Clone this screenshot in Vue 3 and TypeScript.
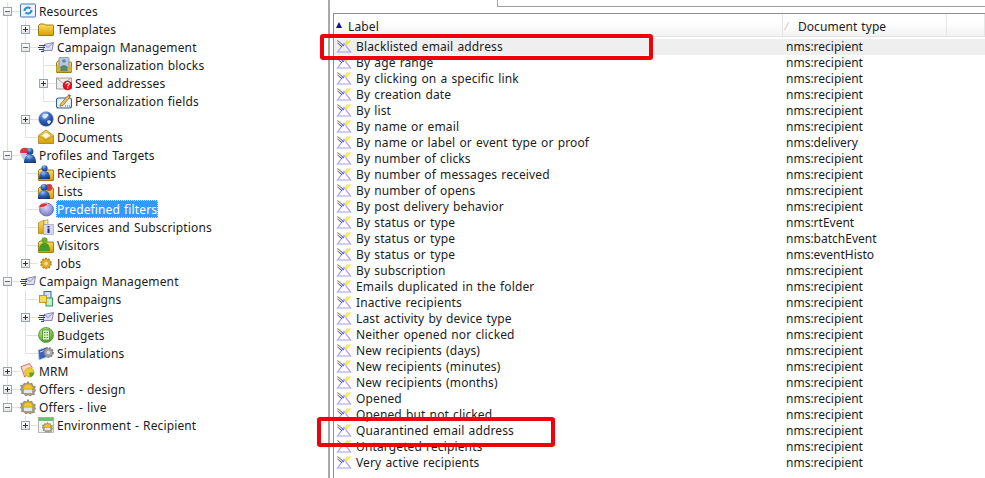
<template>
  <main class="console">
    <svg class="defs" aria-hidden="true">
      <defs>
        <linearGradient id="g-folder" x1="0" y1="0" x2="0" y2="1">
          <stop offset="0" stop-color="#ffe067" />
          <stop offset="1" stop-color="#d99c00" />
        </linearGradient>
        <radialGradient id="g-blue" cx="0.4" cy="0.25" r="0.85">
          <stop offset="0" stop-color="#9cbcec" />
          <stop offset="0.45" stop-color="#2f60bc" />
          <stop offset="1" stop-color="#14306f" />
        </radialGradient>
        <radialGradient id="g-green" cx="0.4" cy="0.3" r="0.8">
          <stop offset="0" stop-color="#c5ee9c" />
          <stop offset="1" stop-color="#3f9a22" />
        </radialGradient>
        <radialGradient id="g-lav" cx="0.45" cy="0.35" r="0.75">
          <stop offset="0" stop-color="#d2d1f4" />
          <stop offset="1" stop-color="#6f6cc0" />
        </radialGradient>
        <symbol id="i-person" viewBox="2 1 12 15">
          <circle cx="8" cy="4.500" r="3.400" fill="url(#g-blue)" />
          <path d="M2 16c0-6 2.200-8.500 6-8.500s6 2.500 6 8.500z" fill="url(#g-blue)" />
        </symbol>
        <symbol id="i-greenperson" viewBox="2 1 12 15">
          <circle cx="8" cy="4.500" r="3.400" fill="#69b02c" />
          <path d="M2 16c0-6 2.200-8.500 6-8.500s6 2.500 6 8.500z" fill="#4c9a20" />
        </symbol>
        <symbol id="i-foldershape" viewBox="0 0 16 16">
          <path d="M.5 4.500 2 3h4.500l1 1h7.500q.500 0 .500.500v9.500q0 .500-.500.500H1q-.500 0-.500-.500z" fill="url(#g-folder)" stroke="#9c7e14" />
        </symbol>
        <symbol id="i-gear" viewBox="0 0 16 16">
          <path d="M8 .5 9.500 3l2.500-.8.600 2.700 2.700.6-.8 2.500 1.500 1.500-2 1.500.4 2.600-2.700.1L10.500 15 8 13.700 5.500 15l-1.200-2.300-2.700-.1.400-2.600-2-1.500L1.500 7l-.8-2.500 2.700-.6L4 2.200l2.500.8z" fill="#a9a18c" stroke="#6f664f" stroke-width=".6" />
        </symbol>
        <symbol id="i-res" viewBox="0 0 16 16">
          <rect x=".5" y="1" width="15" height="13" rx="1" fill="#eef4fb" stroke="#4a74b0" />
          <path d="M4.500 8a3.500 3.500 0 0 1 6-2.500M11.500 7a3.500 3.500 0 0 1-6 2.500" fill="none" stroke="#2a8fd0" stroke-width="2" />
        </symbol>
        <symbol id="i-folder" viewBox="0 0 16 16">
          <use href="#i-foldershape" />
        </symbol>
        <symbol id="i-camp" viewBox="0 0 16 16">
          <path d="M6 5.500 15.500 3.500 14 11.500H5z" fill="#dfdff2" stroke="#7f7eb0" stroke-width=".9" />
          <path d="M6 5.500l4 3 5.500-5" fill="none" stroke="#7f7eb0" stroke-width=".8" />
          <path d="M1 6.500h6M0 8.500h7M1 10.500h5M3 12.500h3" stroke="#3a3a84" stroke-width="1" />
        </symbol>
        <symbol id="i-perso" viewBox="0 0 16 16">
          <use href="#i-foldershape" y="1" />
          <rect x="3" y="0.500" width="10" height="10" rx="1" fill="#b9c8d8" stroke="#6f88a0" stroke-width=".7" />
          <circle cx="8" cy="4" r="1.800" fill="#5a86a8" />
          <path d="M4.500 14V9.500q3.500-3 7 0V14z" fill="#568a78" />
          <rect x="0.500" y="9" width="3" height="5.500" fill="#d5b24a" />
          <rect x="12.500" y="9" width="3" height="5.500" fill="#d5b24a" />
        </symbol>
        <symbol id="i-seed" viewBox="0 0 16 16">
          <path d="M.5 3h15v11H.5z" fill="#ececec" stroke="#8a8a8a" stroke-width=".8" />
          <path d="M.5 3l7 5.500L15 3" fill="none" stroke="#9a9a9a" stroke-width=".8" />
          <circle cx="11.500" cy="10.500" r="4.800" fill="#d8141c" />
          <path d="M9.800 9.300q.2-1.800 1.800-1.800 1.800.1 1.700 1.500c-.1 1.100-1.500 1.200-1.600 2.400M11.700 12.300v1.100" fill="none" stroke="#fff" stroke-width="1.100" />
        </symbol>
        <symbol id="i-field" viewBox="0 0 16 16">
          <rect x=".5" y="5" width="15" height="10" rx="2" fill="#eef4fb" stroke="#2d5f9a" stroke-width="1.100" />
          <path d="M4 11.500 12 2.500l2 1.500-7 8.500-3 .8z" fill="#e9c25e" stroke="#7a5a20" stroke-width=".7" />
          <path d="M12 2.500l1-1.500 2 1.500-1 1.500z" fill="#c94a3c" />
          <path d="M9 13h1M11 13h1M13 13h1" stroke="#2d5f9a" />
        </symbol>
        <symbol id="i-globe" viewBox="0 0 16 16">
          <circle cx="8" cy="8" r="7.500" fill="url(#g-blue)" stroke="#b4c0d8" stroke-width=".6" />
          <path d="M4 5q2-3 6-2 1 2-1 3-1 2-3 1.500zM9 10q3-1.500 4 .5-1 2.500-3 2.500z" fill="#dfe8f8" />
        </symbol>
        <symbol id="i-docs" viewBox="0 0 16 16">
          <path d="M.5 6.500 8 1l7.500 5.500v8H.5z" fill="url(#g-folder)" stroke="#a98a20" stroke-width=".9" />
          <path d="M3 6.500 8 3l5 3.500L8 10z" fill="#fdf7d8" stroke="#b89c3c" stroke-width=".6" />
          <path d="M.5 7 8 11.500 15.500 7" fill="none" stroke="#b58f1c" stroke-width=".8" />
        </symbol>
        <symbol id="i-profiles" viewBox="0 0 16 16">
          <ellipse cx="5" cy="4.500" rx="5" ry="3.800" fill="#d83a3c" />
          <path d="M0 6q1 4 4 7l3-7z" fill="#c8c8e4" />
          <use href="#i-person" x="4" y="1" width="12" height="15" />
        </symbol>
        <symbol id="i-recipients" viewBox="0 0 16 16">
          <use href="#i-foldershape" y="1" />
          <use href="#i-person" x="1" y="0" width="11" height="14" />
        </symbol>
        <symbol id="i-lists" viewBox="0 0 16 16">
          <use href="#i-foldershape" y="1" />
          <circle cx="11" cy="4.500" r="3.400" fill="#d83a3c" />
          <use href="#i-person" x="0" y="1" width="12" height="15" />
        </symbol>
        <symbol id="i-filter" viewBox="0 0 16 16">
          <ellipse cx="8.500" cy="8.500" rx="7" ry="6.500" fill="url(#g-lav)" stroke="#5f5ca6" stroke-width=".8" />
          <path d="M.5 7Q1 2.500 6 2q3-.2 4 1-2 3.500-9.500 4z" fill="#dc2f3c" stroke="#f4f4fb" stroke-width=".6" />
        </symbol>
        <symbol id="i-services" viewBox="0 0 16 16">
          <path d="M.5 4 6 1v13.500H.5z" fill="url(#g-folder)" stroke="#a98a20" stroke-width=".8" />
          <path d="M6 2l4-1.500V6H6z" fill="#f3e7a8" stroke="#a98a20" stroke-width=".6" />
          <rect x="5.500" y="5.500" width="10" height="10" fill="#d6d8ee" stroke="#8f90c0" stroke-width=".6" />
          <path d="M10.500 7v1.500M10.500 9.500V14" stroke="#20208a" stroke-width="2" />
        </symbol>
        <symbol id="i-visitors" viewBox="0 0 16 16">
          <use href="#i-foldershape" y="1" />
          <use href="#i-greenperson" x="1" y="0" width="11" height="14" />
        </symbol>
        <symbol id="i-jobs" viewBox="0 0 16 16">
          <circle cx="8" cy="8.500" r="4.800" fill="#eeb52c" stroke="#b8891c" stroke-dasharray="2 1" stroke-width="2" />
          <circle cx="8" cy="8.500" r="2.600" fill="#f8d878" stroke="#c4922a" stroke-width=".8" />
        </symbol>
        <symbol id="i-campaigns" viewBox="0 0 16 16">
          <rect x="6" y=".5" width="7" height="9" fill="#d5e1f6" stroke="#3a65b5" />
          <rect x="8" y="7" width="6.500" height="8" fill="#c8ecd0" stroke="#2e9a58" />
          <rect x="1.500" y="4.500" width="7" height="7" fill="#f8dc5c" stroke="#c49a1c" />
        </symbol>
        <symbol id="i-budgets" viewBox="0 0 16 16">
          <circle cx="8" cy="8" r="7.500" fill="url(#g-green)" stroke="#4a8a2a" stroke-width=".7" />
          <rect x="4.500" y="3" width="7" height="10" fill="#dff2c8" stroke="#4a8a2a" stroke-width=".8" />
          <path d="M6 5.500h4M6 8h4M6 10.500h4" stroke="#4a8a2a" stroke-dasharray="1 .5" />
        </symbol>
        <symbol id="i-sim" viewBox="0 0 16 16">
          <path d="M0 5 9 2v10l-8 3z" fill="#3a62b8" stroke="#c8d4ea" stroke-width=".8" />
          <path d="M2 7l4-1.500" stroke="#cfe0f8" />
          <circle cx="10.500" cy="7.500" r="4.500" fill="#a6a6a6" stroke="#777" stroke-dasharray="2 1" stroke-width="1.600" />
          <circle cx="10.500" cy="7.500" r="1.800" fill="#dcdcdc" />
        </symbol>
        <symbol id="i-mrm" viewBox="0 0 17 17">
          <path d="M1 4 10 .5 13 5 5 15z" fill="#f5d8d0" stroke="#d8644c" />
          <circle cx="10" cy="10" r="5" fill="#eecb2e" stroke="#c49a1c" stroke-width=".6" />
          <path d="M10 10l5 0a5 5 0 0 1-5 5z" fill="#4ea83a" />
        </symbol>
        <symbol id="i-offers" viewBox="0 0 16 16">
          <use href="#i-gear" />
          <path d="M3 8a5 5 0 0 1 10 0z" fill="#f2c81a" stroke="#b08c18" stroke-width=".5" />
          <path d="M4 8.500h8v3.500H4z" fill="#dfe6ee" />
        </symbol>
        <symbol id="i-env" viewBox="0 0 16 16">
          <rect x=".5" y=".5" width="15" height="15" fill="#f2f2f2" stroke="#9a9a9a" stroke-width=".7" />
          <rect x=".5" y=".5" width="15" height="3.500" fill="#6cc070" />
          <use href="#i-offers" x="4" y="5" width="11" height="11" />
        </symbol>
        <symbol id="i-rowfilter" viewBox="0 0 16 14">
          <path d="M1.500 12 8 3.500 14.500 12z" fill="none" stroke="#a09ee8" stroke-width="1.200" />
          <path d="M1.500 .5 8 6M1.500 3 6 6.800" stroke="#34348c" stroke-width=".9" />
          <path d="M14.500 .5 9.500 5.500M12 .5 9 3.500" stroke="#f2e030" stroke-width="1.300" />
        </symbol>
      </defs>
    </svg>

    <nav class="tree">
      <div v-for="node in nodes" :key="node.label + node.cells" class="node">
        <span v-for="(cell, i) in node.cells" :key="i" class="cell" :class="cellClass(cell)">
          <span
            v-if="node.toggle && i === node.cells.length - 1"
            class="toggle"
            :class="{ open: node.toggle === '-' }"
          ></span>
        </span>
        <svg class="node-icon" width="16" height="16"><use :href="'#i-' + node.icon" /></svg>
        <span class="node-label" :class="{ selected: node.selected }">{{ node.label }}</span>
      </div>
    </nav>

    <section class="pane">
      <div class="search-strip"><div class="search-box"></div></div>
      <div class="grid">
        <div class="grid-head">
          <div class="head-cell label-head"><span class="sort-up"></span>Label</div>
          <div class="head-cell type-head"><span class="sort-mark">⁄</span>Document type</div>
          <div class="head-cell"></div>
        </div>
        <div
          v-for="(row, i) in filters"
          :key="row.label + row.type"
          class="grid-row"
          :class="{ current: i === 0 }"
        >
          <div class="row-label">
            <svg class="row-icon" width="16" height="14"><use href="#i-rowfilter" /></svg>{{ row.label }}
          </div>
          <div class="row-type">{{ row.type }}</div>
        </div>
      </div>
    </section>

    <div class="callout callout-top"></div>
    <div class="callout callout-bottom"></div>
  </main>
</template>

<script setup lang="ts">
interface TreeNode {
  label: string;
  icon: string;
  cells: string;
  toggle?: "+" | "-";
  selected?: boolean;
}

const nodes: TreeNode[] = [
  { label: "Resources", icon: "res", cells: "t", toggle: "-" },
  { label: "Templates", icon: "folder", cells: "vt", toggle: "+" },
  { label: "Campaign Management", icon: "camp", cells: "vt", toggle: "-" },
  { label: "Personalization blocks", icon: "perso", cells: "vvt" },
  { label: "Seed addresses", icon: "seed", cells: "vvt", toggle: "+" },
  { label: "Personalization fields", icon: "field", cells: "vvl" },
  { label: "Online", icon: "globe", cells: "vt", toggle: "+" },
  { label: "Documents", icon: "docs", cells: "vl" },
  { label: "Profiles and Targets", icon: "profiles", cells: "t", toggle: "-" },
  { label: "Recipients", icon: "recipients", cells: "vt" },
  { label: "Lists", icon: "lists", cells: "vt" },
  { label: "Predefined filters", icon: "filter", cells: "vt", selected: true },
  { label: "Services and Subscriptions", icon: "services", cells: "vt" },
  { label: "Visitors", icon: "visitors", cells: "vt" },
  { label: "Jobs", icon: "jobs", cells: "vl", toggle: "+" },
  { label: "Campaign Management", icon: "camp", cells: "t", toggle: "-" },
  { label: "Campaigns", icon: "campaigns", cells: "vt" },
  { label: "Deliveries", icon: "camp", cells: "vt", toggle: "+" },
  { label: "Budgets", icon: "budgets", cells: "vt" },
  { label: "Simulations", icon: "sim", cells: "vl" },
  { label: "MRM", icon: "mrm", cells: "t", toggle: "+" },
  { label: "Offers - design", icon: "offers", cells: "t", toggle: "+" },
  { label: "Offers - live", icon: "offers", cells: "l", toggle: "-" },
  { label: "Environment - Recipient", icon: "env", cells: " l", toggle: "+" },
];

const filters = [
  ["Blacklisted email address", "nms:recipient"],
  ["By age range", "nms:recipient"],
  ["By clicking on a specific link", "nms:recipient"],
  ["By creation date", "nms:recipient"],
  ["By list", "nms:recipient"],
  ["By name or email", "nms:recipient"],
  ["By name or label or event type or proof", "nms:delivery"],
  ["By number of clicks", "nms:recipient"],
  ["By number of messages received", "nms:recipient"],
  ["By number of opens", "nms:recipient"],
  ["By post delivery behavior", "nms:recipient"],
  ["By status or type", "nms:rtEvent"],
  ["By status or type", "nms:batchEvent"],
  ["By status or type", "nms:eventHisto"],
  ["By subscription", "nms:recipient"],
  ["Emails duplicated in the folder", "nms:recipient"],
  ["Inactive recipients", "nms:recipient"],
  ["Last activity by device type", "nms:recipient"],
  ["Neither opened nor clicked", "nms:recipient"],
  ["New recipients (days)", "nms:recipient"],
  ["New recipients (minutes)", "nms:recipient"],
  ["New recipients (months)", "nms:recipient"],
  ["Opened", "nms:recipient"],
  ["Opened but not clicked", "nms:recipient"],
  ["Quarantined email address", "nms:recipient"],
  ["Untargeted recipients", "nms:recipient"],
  ["Very active recipients", "nms:recipient"],
].map(([label, type]) => ({ label, type }));

function cellClass(cell: string) {
  if (cell === "v") return "line";
  if (cell === "t") return "line branch";
  if (cell === "l") return "elbow branch";
  return "";
}
</script>

<style scoped>
.console {
  position: relative;
  display: flex;
  width: 985px;
  height: 478px;
  overflow: hidden;
  background: #fff;
  color: #1c1c1c;
  font-family: "Noto Sans", "Liberation Sans", sans-serif;
  font-size: 12px;
  letter-spacing: 0.13px;
  word-spacing: 0.85px;
}

.defs {
  position: absolute;
  width: 0;
  height: 0;
}

.tree {
  flex: none;
  width: 328px;
  padding-top: 2px;
  box-sizing: border-box;
}

.node {
  display: flex;
  align-items: center;
  height: 18px;
  margin-left: -2px;
}

.cell {
  position: relative;
  flex: none;
  width: 18px;
  height: 18px;
}

.line::before,
.elbow::before {
  content: "";
  position: absolute;
  left: 9px;
  top: 0;
  width: 1px;
  height: 100%;
  background: #e2e2e2;
}

.elbow::before {
  height: 9px;
}

.branch::after {
  content: "";
  position: absolute;
  left: 9px;
  top: 9px;
  width: 13px;
  height: 1px;
  background: #e2e2e2;
}

.toggle {
  position: absolute;
  z-index: 1;
  left: 5px;
  top: 5px;
  width: 9px;
  height: 9px;
  box-sizing: border-box;
  border: 1px solid #98a4b0;
  background:
    linear-gradient(#333, #333) center / 5px 1px no-repeat,
    linear-gradient(#333, #333) center / 1px 5px no-repeat,
    linear-gradient(#fff, #e4e4e4);
}

.toggle.open {
  background:
    linear-gradient(#666, #666) center / 5px 1px no-repeat,
    linear-gradient(#fff, #e4e4e4);
}

.node-icon {
  flex: none;
  margin-left: 4px;
}

.node-label {
  height: 18px;
  margin-left: 2px;
  padding: 0 1px;
  line-height: 20px;
  white-space: nowrap;
}

.node-label.selected {
  box-sizing: border-box;
  background: #3399ff;
  color: #fff;
  outline: 1px dotted #cfe6ff;
  outline-offset: -1px;
}

.pane {
  flex: 1;
  min-width: 0;
  border-left: 2px solid #a8a8a8;
  padding-left: 3px;
}

.search-strip {
  height: 7px;
  padding-left: 164px;
  box-sizing: border-box;
}

.search-box {
  height: 7px;
  box-sizing: border-box;
  border-left: 1px solid #a0a0a0;
  border-bottom: 1px solid #a0a0a0;
}

.grid {
  margin-top: 6px;
  height: 465px;
  box-sizing: border-box;
  border-top: 1px solid #8e8e8e;
  border-left: 1px solid #8e8e8e;
}

.grid-head {
  display: grid;
  grid-template-columns: 449px 164px 1fr;
  height: 22px;
  margin-bottom: 2px;
  border-bottom: 1px solid #e4e4e4;
  background: linear-gradient(#fff 35%, #f3f3f3);
}

.head-cell {
  display: flex;
  align-items: center;
  padding-top: 2px;
  box-sizing: border-box;
  border-right: 1px solid #e6e6e6;
}

.label-head {
  padding-left: 2px;
}

.sort-up {
  width: 0;
  height: 0;
  margin-right: 6px;
  margin-bottom: 2px;
  border-left: 3.500px solid transparent;
  border-right: 3.500px solid transparent;
  border-bottom: 6px solid #12128c;
}

.type-head {
  padding-left: 3px;
  letter-spacing: 0.05px;
}

.sort-mark {
  width: 12px;
  color: #bbb;
  font-size: 10px;
}

.grid-row {
  display: grid;
  grid-template-columns: 449px 1fr;
  height: 16px;
  line-height: 16px;
  white-space: nowrap;
}

.grid-row.current {
  background: #efefef;
}

.row-label {
  display: flex;
  align-items: center;
  padding-left: 2px;
}

.row-icon {
  flex: none;
  margin-right: 4px;
}

.row-type {
  padding-left: 3px;
  letter-spacing: 0;
}

.callout {
  position: absolute;
  box-sizing: border-box;
  border: 4px solid #f00008;
  border-radius: 3px;
}

.callout-top {
  left: 320px;
  top: 34px;
  width: 333px;
  height: 26px;
}

.callout-bottom {
  left: 317px;
  top: 417px;
  width: 238px;
  height: 30px;
}
</style>
